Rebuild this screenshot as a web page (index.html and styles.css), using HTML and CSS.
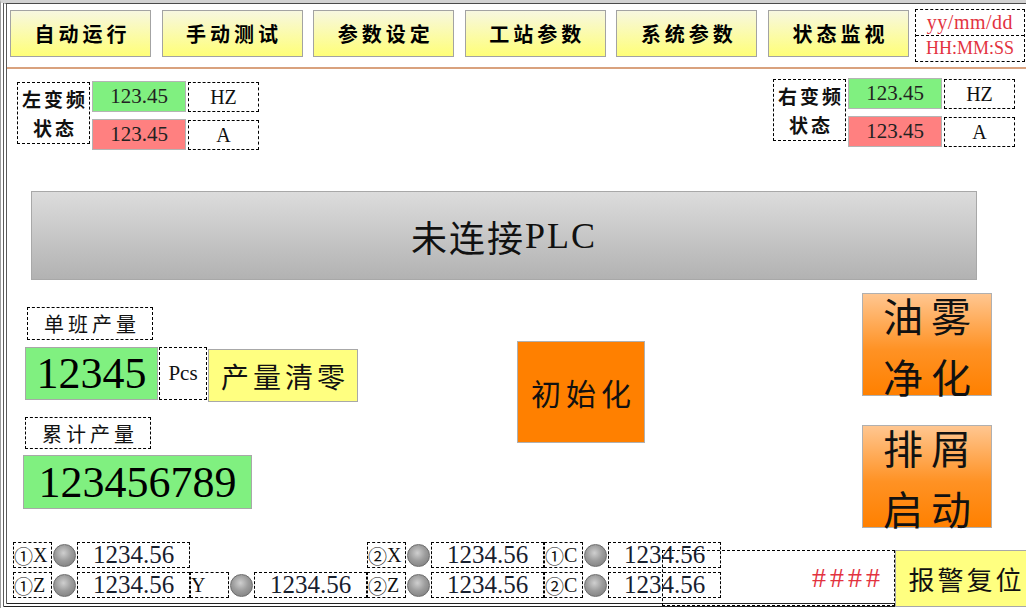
FILE: index.html
```html
<!DOCTYPE html>
<html lang="zh-CN">
<head>
<meta charset="utf-8">
<title>主画面</title>
<link rel="stylesheet" href="styles.css">
</head>
<body>
<div class="screen">
  <div class="panel">
    <header class="nav">
      <div class="nav-btns">
        <div class="nav-btn">自动运行</div>
        <div class="nav-btn">手动测试</div>
        <div class="nav-btn">参数设定</div>
        <div class="nav-btn">工站参数</div>
        <div class="nav-btn">系统参数</div>
        <div class="nav-btn">状态监视</div>
      </div>
      <div class="clock">
        <div class="clock-line date">yy/mm/dd</div>
        <div class="clock-line">HH:MM:SS</div>
      </div>
    </header>
    <div class="rule"></div>

    <section class="freq-row">
      <div class="freq freq-left">
        <div class="freq-label">左变频<br>状态</div>
        <div class="freq-val ok">123.45</div>
        <div class="freq-unit">HZ</div>
        <div class="freq-val warn">123.45</div>
        <div class="freq-unit">A</div>
      </div>
      <div class="freq freq-right">
        <div class="freq-label">右变频<br>状态</div>
        <div class="freq-val ok">123.45</div>
        <div class="freq-unit">HZ</div>
        <div class="freq-val warn">123.45</div>
        <div class="freq-unit">A</div>
      </div>
    </section>

    <div class="banner"><span class="zh">未连接</span><span class="latin">PLC</span></div>

    <section class="work">
      <div class="output">
        <div class="tag-title">单班产量</div>
        <div class="count-row">
          <div class="count">12345</div>
          <div class="pcs">Pcs</div>
          <div class="clear-btn">产量清零</div>
        </div>
        <div class="tag-title total-title">累计产量</div>
        <div class="count total">123456789</div>
      </div>
      <div class="init-btn">初始化</div>
      <div class="side-btns">
        <div class="side-btn"><span>油雾<br>净化</span></div>
        <div class="side-btn"><span>排屑<br>启动</span></div>
      </div>
    </section>

    <section class="axes">
      <div class="axis-grid">
        <div class="axis"><div class="axis-tag"><span class="circ">①</span>X</div><div class="led"></div><div class="axis-val">1234.56</div></div>
        <div class="axis empty"></div>
        <div class="axis"><div class="axis-tag"><span class="circ">②</span>X</div><div class="led"></div><div class="axis-val">1234.56</div></div>
        <div class="axis"><div class="axis-tag"><span class="circ">①</span>C</div><div class="led"></div><div class="axis-val">1234.56</div></div>

        <div class="axis"><div class="axis-tag"><span class="circ">①</span>Z</div><div class="led"></div><div class="axis-val">1234.56</div></div>
        <div class="axis"><div class="axis-tag">Y</div><div class="led"></div><div class="axis-val">1234.56</div></div>
        <div class="axis"><div class="axis-tag"><span class="circ">②</span>Z</div><div class="led"></div><div class="axis-val">1234.56</div></div>
        <div class="axis"><div class="axis-tag"><span class="circ">②</span>C</div><div class="led"></div><div class="axis-val">1234.56</div></div>
      </div>
      <div class="alarm">####</div>
      <div class="reset-btn">报警复位</div>
    </section>
  </div>
</div>
</body>
</html>
```
FILE: styles.css
```css
* { box-sizing: border-box; }

html, body {
  margin: 0;
  background: #fff;
}

body {
  font-family: "Liberation Serif", "Times New Roman", serif;
  color: #111;
}

.zh,
.nav-btn,
.freq-label,
.tag-title,
.clear-btn,
.init-btn,
.side-btn,
.reset-btn,
.circ {
  font-family: "Noto Sans CJK SC", sans-serif;
}

.latin {
  font-family: "Liberation Serif", "Times New Roman", serif;
}

/* window frame */
.screen {
  width: 1026px;
  height: 608px;
  overflow: hidden;
  border-top: 3px solid #d2d2d2;
  border-left: 1px solid #9c9c9c;
  padding-left: 2px;
  background: #fff;
}

.panel {
  height: 604px;
  border-top: 1px solid #4a4a4a;
  border-left: 4px double #5a5a5a;
  border-bottom: 4px double #222;
}

/* top navigation */
.nav {
  display: flex;
  align-items: flex-start;
  padding: 6px 0 0 3px;
}

.nav-btns {
  display: flex;
  gap: 10.6px;
}

.nav-btn {
  width: 141px;
  height: 47px;
  border: 1px solid #a3a3a3;
  background: linear-gradient(#f7f7e0, #ffff78);
  display: flex;
  align-items: center;
  justify-content: center;
  padding-left: 4px;
  font-weight: bold;
  font-size: 20px;
  letter-spacing: 4px;
  color: #000;
}

.clock {
  margin: -1px 0 0 6px;
  width: 110px;
  height: 53px;
  border: 1px dashed #000;
  display: flex;
  flex-direction: column;
}

.clock-line {
  flex: 1;
  display: flex;
  align-items: center;
  justify-content: center;
  font-size: 18px;
  color: #e3333f;
}

.clock-line.date {
  font-size: 20px;
  letter-spacing: 0.5px;
}

.clock-line + .clock-line {
  border-top: 1px dashed #000;
}

.rule {
  margin-top: 5px;
  height: 2px;
  background: #d9a27e;
}

/* inverter status */
.freq-row {
  display: flex;
  justify-content: space-between;
  align-items: flex-start;
  padding: 0 11px 0 10px;
}

.freq {
  display: grid;
  grid-template-columns: 73px 94px 71px;
  grid-template-rows: 31px 31px;
  column-gap: 2px;
  row-gap: 7px;
}

.freq-left { margin-top: 12px; }
.freq-right { margin-top: 9px; }

.freq-label {
  grid-row: 1 / span 2;
  margin-top: 1px;
  height: 62px;
  border: 1px dashed #000;
  display: flex;
  align-items: center;
  justify-content: center;
  text-align: center;
  padding-left: 3px;
  font-weight: bold;
  font-size: 19px;
  line-height: 29px;
  letter-spacing: 3px;
}

.freq-val {
  display: flex;
  align-items: center;
  justify-content: center;
  border: 1px solid #b4b4b4;
  font-size: 21px;
  color: #222;
}

.freq-val.ok { background: #80f080; }
.freq-val.warn { background: #ff8080; }

.freq-unit {
  margin-top: 1px;
  border: 1px dashed #000;
  display: flex;
  align-items: center;
  justify-content: center;
  font-size: 20px;
}

/* connection banner */
.banner {
  margin: 41px 0 0 24px;
  width: 946px;
  height: 89px;
  border: 1px solid #a8a8a8;
  background: linear-gradient(#dcdcdc, #b2b2b2);
  display: flex;
  align-items: center;
  justify-content: center;
  font-size: 36px;
  letter-spacing: 2px;
  color: #111;
}

/* production counters and commands */
.work {
  display: flex;
  align-items: flex-start;
}

.output {
  padding: 27px 0 0 16px;
  display: flex;
  flex-direction: column;
  align-items: flex-start;
}

.tag-title {
  margin-left: 4px;
  width: 126px;
  height: 33px;
  border: 1px dashed #000;
  display: flex;
  align-items: center;
  justify-content: center;
  padding-left: 4px;
  font-size: 20px;
  letter-spacing: 4px;
}

.total-title {
  margin: 15px 0 0 2px;
  height: 32px;
}

.count-row {
  margin: 7px 0 0 2px;
  display: flex;
  align-items: flex-start;
}

.count {
  width: 133px;
  height: 53px;
  background: #80f080;
  border: 1px solid #a8a8a8;
  display: flex;
  align-items: center;
  justify-content: center;
  font-size: 44px;
  color: #000;
}

.pcs {
  margin-left: 1px;
  width: 48px;
  height: 53px;
  border: 1px dashed #000;
  display: flex;
  align-items: center;
  justify-content: center;
  font-size: 21px;
}

.clear-btn {
  margin: 2px 0 0 1px;
  width: 150px;
  height: 53px;
  background: #ffff80;
  border: 1px solid #a8a8a8;
  display: flex;
  align-items: center;
  justify-content: center;
  padding-left: 4px;
  font-size: 28px;
  letter-spacing: 4px;
}

.count.total {
  margin-top: 6px;
  width: 229px;
  height: 54px;
}

.init-btn {
  margin: 61px 0 0 159px;
  width: 128px;
  height: 102px;
  background: #ff8000;
  border: 1px solid #b0b0b0;
  display: flex;
  align-items: center;
  justify-content: center;
  padding-left: 5px;
  font-size: 30px;
  letter-spacing: 5px;
}

.side-btns {
  margin: 13px 0 0 217px;
  display: flex;
  flex-direction: column;
  gap: 29px;
}

.side-btn {
  width: 130px;
  height: 103px;
  border: 1px solid #b0b0b0;
  background: linear-gradient(#ffc690, #ff9224 55%, #ff8000);
  display: flex;
  align-items: center;
  justify-content: center;
  padding: 2px 0 0 8px;
  font-size: 40px;
  line-height: 61px;
  letter-spacing: 8px;
  text-align: center;
}

/* axis positions */
.axes {
  position: relative;
  margin-top: 14px;
  padding-left: 6px;
}

.axis-grid {
  display: grid;
  grid-template-columns: repeat(4, 177px);
  grid-auto-rows: 26px;
  row-gap: 4px;
}

.axis {
  display: flex;
  align-items: center;
}

.axis-tag {
  width: 39px;
  height: 26px;
  border: 1px dashed #000;
  display: flex;
  align-items: center;
  padding-left: 0;
  font-size: 20px;
  white-space: nowrap;
  overflow: hidden;
}

.circ {
  font-size: 19px;
  line-height: 1;
}

.led {
  flex: none;
  width: 23px;
  height: 23px;
  margin: 0 1px;
  border-radius: 50%;
  border: 1px solid #6c6c6c;
  background: radial-gradient(circle at 45% 38%, #cfcfcf 0%, #9d9d9d 45%, #767676 100%);
}

.axis-val {
  width: 113px;
  height: 26px;
  border: 1px dashed #000;
  display: flex;
  align-items: center;
  justify-content: center;
  font-size: 25px;
  color: #17202e;
}

/* alarm message and reset */
.alarm {
  position: absolute;
  left: 655px;
  top: 8px;
  width: 233px;
  height: 56px;
  border: 1px dashed #000;
  display: flex;
  align-items: center;
  justify-content: flex-end;
  padding-right: 10px;
  font-size: 28px;
  letter-spacing: 4px;
  color: #e3333f;
}

.reset-btn {
  position: absolute;
  left: 888px;
  top: 8px;
  width: 140px;
  height: 57px;
  background: #ffff80;
  border: 1px solid #a8a8a8;
  display: flex;
  align-items: center;
  justify-content: center;
  padding-left: 3px;
  font-size: 26px;
  letter-spacing: 3px;
}
```
